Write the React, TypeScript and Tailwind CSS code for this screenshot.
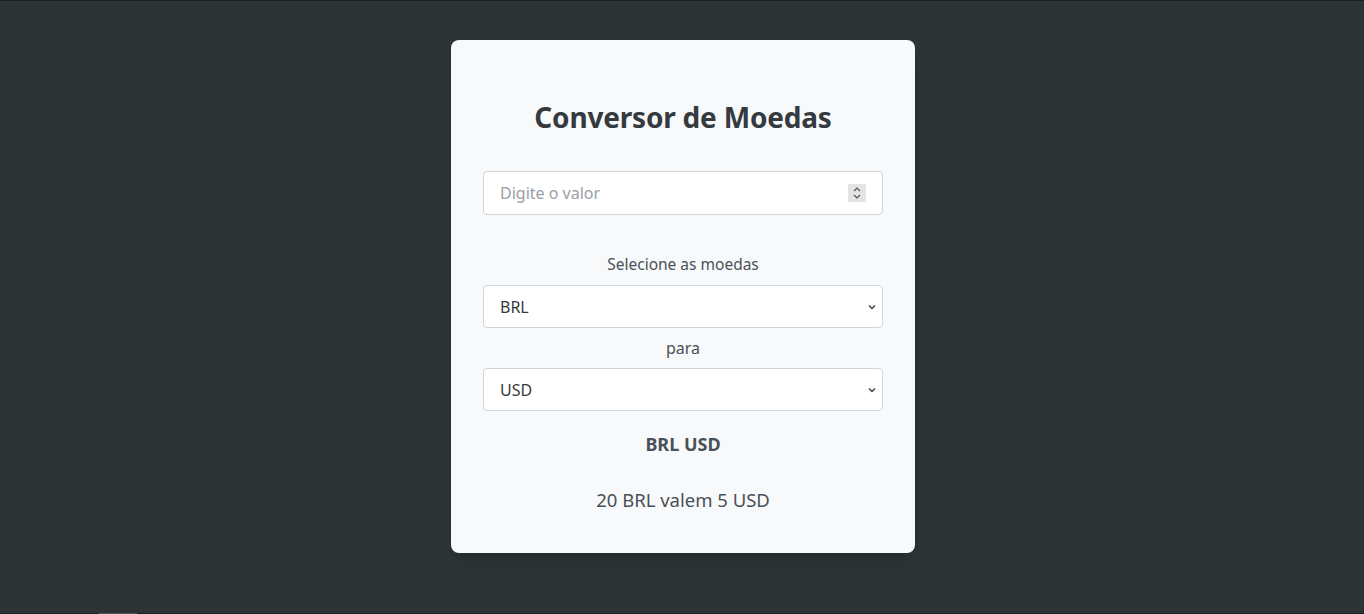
import React from "react";

export default function App() {
  return (
    <div
      className="w-[1364px] h-[614px] bg-[#2d3436] flex flex-col"
      style={{ fontFamily: '"Noto Sans", "Open Sans", sans-serif' }}
    >
      <div className="h-px bg-[#1d1f22]" />
      <div className="flex-1 flex justify-center pt-[39px] pl-[2px]">
        <div className="w-[464px] h-[513px] bg-[#f8f9fa] rounded-lg shadow-lg px-8 pt-[59px] flex flex-col items-center text-[#495057]">
          <h2 className="text-[28px] leading-[36px] font-bold text-[#343a40] tracking-[-0.2px]">
            Conversor de Moedas
          </h2>
          <div className="relative w-[400px] h-[44px] mt-[36px] bg-white border border-[#ced4da] rounded-[4px] flex items-center px-4">
            <span className="text-[16px] text-[#9aa0a6]">Digite o valor</span>
            <div className="absolute right-[16px] top-[12px] w-[18px] h-[18px] bg-[#e4e4e6] flex items-center justify-center">
              <svg width="10" height="14" viewBox="0 0 10 14" fill="none" stroke="#555" strokeWidth="1.2">
                <path d="M2 5 L5 2 L8 5" />
                <path d="M2 9 L5 12 L8 9" />
              </svg>
            </div>
          </div>
          <div className="mt-[37px] text-[15.5px] leading-[24px]">Selecione as moedas</div>
          <div className="relative w-[400px] h-[43px] mt-[9px] bg-white border border-[#ced4da] rounded-[4px] flex items-center px-4 text-[16px] text-[#343a40]">
            BRL
            <svg className="absolute right-[6px] top-[17px]" width="8" height="8" viewBox="0 0 8 8" fill="none" stroke="#343a40" strokeWidth="1.3">
              <path d="M1 2.5 L4 5.5 L7 2.5" />
            </svg>
          </div>
          <div className="mt-[8px] text-[16px] leading-[24px]">para</div>
          <div className="relative w-[400px] h-[43px] mt-[8px] bg-white border border-[#ced4da] rounded-[4px] flex items-center px-4 text-[16px] text-[#343a40]">
            USD
            <svg className="absolute right-[6px] top-[17px]" width="8" height="8" viewBox="0 0 8 8" fill="none" stroke="#343a40" strokeWidth="1.3">
              <path d="M1 2.5 L4 5.5 L7 2.5" />
            </svg>
          </div>
          <div className="mt-[20px] text-[18px] leading-[27px] font-bold">BRL USD</div>
          <div className="mt-[28px] text-[18.5px] leading-[27px]">20 BRL valem 5 USD</div>
        </div>
      </div>
      <div className="h-px bg-[#1d1f22] flex">
        <div className="ml-[99px] w-[38px] bg-[#555]" />
      </div>
    </div>
  );
}
